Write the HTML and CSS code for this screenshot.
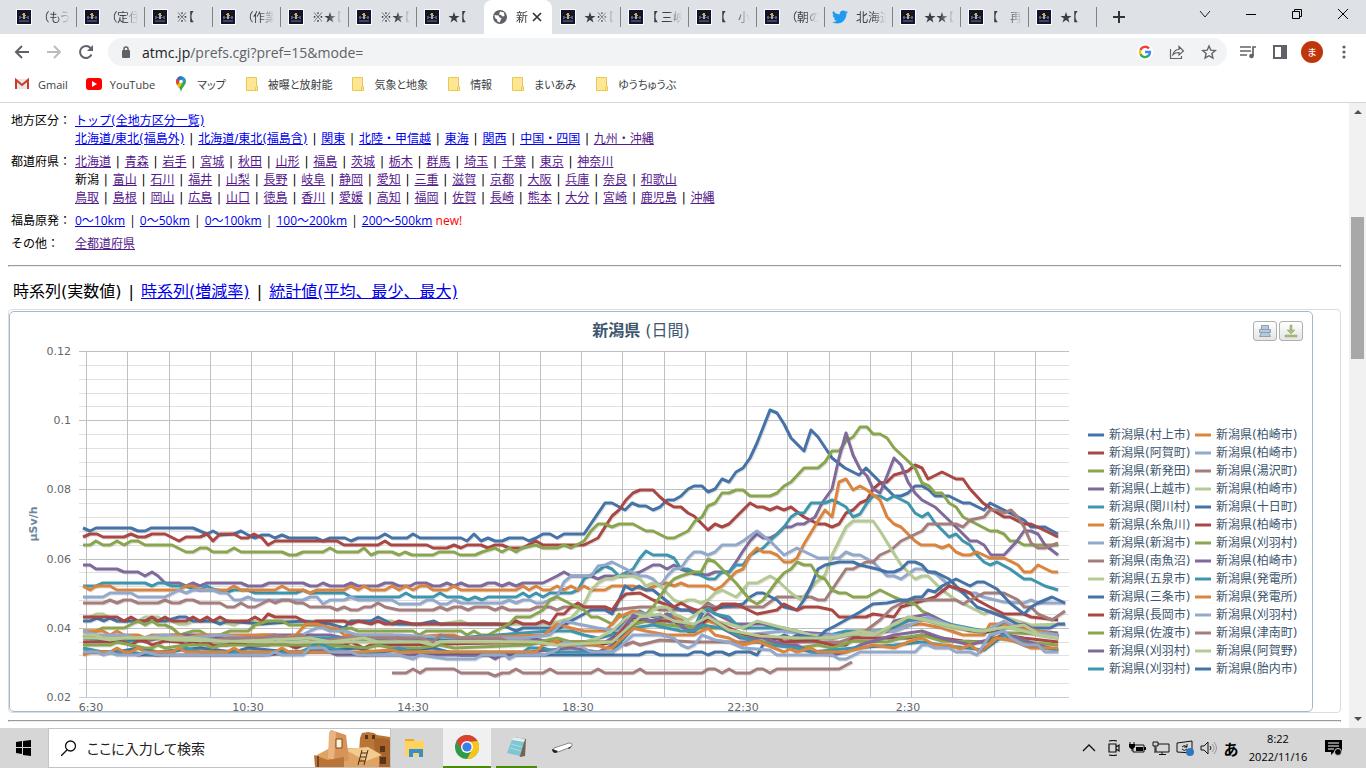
FILE: index.html
```html
<!DOCTYPE html>
<html lang="ja">
<head>
    <meta charset="UTF-8">
    <meta name="viewport" content="width=device-width, initial-scale=1.0">
    <title>新潟県</title>
    <link rel="stylesheet" href="styles.css">
</head>
<body>

    <!-- shared icons -->
    <svg class="defs" width="0" height="0">
        <symbol id="night" viewBox="0 0 16 16">
            <rect width="16" height="16" fill="#fff"/>
            <rect x="1" y="1" width="14" height="14" fill="#12142c"/>
            <path d="M3 7h2v3H3zM11 7h2v3h-2zM5 8h6v1H5z" fill="#4d5680"/>
            <path d="M7 4h2v2h1v1H9v3H7V6H6V5h1z" fill="#c9ad5a"/>
            <path d="M3 12h10" stroke="#6e7592"/>
        </symbol>
        <symbol id="folder" viewBox="0 0 16 16">
            <path d="M2.500 1.500h10v9h1v4h-11z" fill="#ffe694" stroke="#e8c84d"/>
            <path d="M11.500 14.500v-3l1-1" fill="none" stroke="#e8c84d"/>
        </symbol>
    </svg>

    <!-- tabs -->
    <header class="tabstrip">
        <div class="tabs">
            <div class="tab"><svg class="fav"><use href="#night"/></svg><span class="name">&nbsp;（もう</span></div>
            <div class="tab"><svg class="fav"><use href="#night"/></svg><span class="name">&nbsp;（定住</span></div>
            <div class="tab"><svg class="fav"><use href="#night"/></svg><span class="name">※【</span></div>
            <div class="tab"><svg class="fav"><use href="#night"/></svg><span class="name">&nbsp;（作業</span></div>
            <div class="tab"><svg class="fav"><use href="#night"/></svg><span class="name">※★【</span></div>
            <div class="tab"><svg class="fav"><use href="#night"/></svg><span class="name">※★【</span></div>
            <div class="tab no-line"><svg class="fav"><use href="#night"/></svg><span class="name">★【</span></div>
            <div class="tab active">
                <svg class="fav" viewBox="0 0 16 16"><circle cx="8" cy="8" r="7" fill="#5f6368"/><path d="M2.500 6l4 .500 1 2 2 .500-1 2.500-1 2-2-1-.500-2-2-1.500zM8 2.500l4 1 .500 3.500-2 .500-1.500-1.500-2-.500z" fill="#fff"/></svg>
                <span class="name short">新</span>
                <button class="close" aria-label="閉じる"><svg width="10" height="10"><path d="M1 1l8 8M9 1l-8 8" stroke="#333" stroke-width="1.700"/></svg></button>
            </div>
            <div class="tab"><svg class="fav"><use href="#night"/></svg><span class="name">★※【</span></div>
            <div class="tab"><svg class="fav"><use href="#night"/></svg><span class="name">【 三峡</span></div>
            <div class="tab"><svg class="fav"><use href="#night"/></svg><span class="name">【　小</span></div>
            <div class="tab"><svg class="fav"><use href="#night"/></svg><span class="name">&nbsp;（朝の</span></div>
            <div class="tab"><svg class="fav" viewBox="0 0 24 24"><path d="M23.950 4.570a10 10 0 01-2.820.770 4.960 4.960 0 002.160-2.720c-.950.550-2 .950-3.120 1.180a4.920 4.920 0 00-8.390 4.490C7.690 8.090 4.070 6.130 1.640 3.160a4.920 4.920 0 001.520 6.570 4.900 4.900 0 01-2.230-.610v.060a4.920 4.920 0 003.950 4.820 5 5 0 01-2.210.090 4.940 4.940 0 004.600 3.420A9.870 9.870 0 010 19.540a13.990 13.990 0 007.550 2.210c9.050 0 14-7.500 14-13.980l-.020-.640a10 10 0 002.420-2.560z" fill="#1d9bf0"/></svg><span class="name">北海道</span></div>
            <div class="tab"><svg class="fav"><use href="#night"/></svg><span class="name">★★【</span></div>
            <div class="tab"><svg class="fav"><use href="#night"/></svg><span class="name">【　再</span></div>
            <div class="tab"><svg class="fav"><use href="#night"/></svg><span class="name">★【</span></div>
        </div>
        <button class="new-tab" aria-label="新しいタブ"><svg width="12" height="12"><path d="M6 0v12M0 6h12" stroke="#333" stroke-width="2"/></svg></button>
        <div class="window-buttons">
            <button aria-label="タブを検索"><svg width="12" height="12"><path d="M1 3l5 6 5-6" fill="none" stroke="#222"/></svg></button>
            <button aria-label="最小化"><svg width="12" height="12"><path d="M1 6.500h10" stroke="#000"/></svg></button>
            <button aria-label="元に戻す"><svg width="12" height="12"><path d="M1.500 3.500h7v7h-7zM3.500 3.500v-2h7v7h-2" fill="none" stroke="#000"/></svg></button>
            <button aria-label="閉じる"><svg width="12" height="12"><path d="M1 1l10 10M11 1L1 11" stroke="#000"/></svg></button>
        </div>
    </header>

    <!-- address bar -->
    <div class="toolbar">
        <button aria-label="戻る"><svg width="16" height="16"><path d="M15 8H2M8 2L2 8l6 6" fill="none" stroke="#5f6368" stroke-width="2"/></svg></button>
        <button aria-label="進む"><svg width="16" height="16"><path d="M1 8h13M8 2l6 6-6 6" fill="none" stroke="#babcbe" stroke-width="2"/></svg></button>
        <button aria-label="再読み込み"><svg width="16" height="16"><path d="M13.500 10.500A6 6 0 1 1 12.500 4" fill="none" stroke="#5f6368" stroke-width="2"/><path d="M15 1v6H9z" fill="#5f6368"/></svg></button>
        <div class="omnibox">
            <svg width="10" height="14"><rect x="1" y="5" width="8" height="8" rx="1" fill="#5f6368"/><path d="M3 6V4a2 2 0 0 1 4 0v2" fill="none" stroke="#5f6368" stroke-width="1.500"/></svg>
            <a class="url" href="#"><b>atmc.jp</b>/prefs.cgi?pref=15&amp;mode=</a>
            <button aria-label="Google"><svg width="16" height="16" viewBox="0 0 16 16"><circle cx="8" cy="8" r="8" fill="#fff"/><g fill="none" stroke-width="2.400"><path d="M12 4.500A5 5 0 0 0 3.500 6" stroke="#ea4335"/><path d="M3.500 6a5 5 0 0 0 0 4.500" stroke="#fbbc05"/><path d="M3.500 10.200a5 5 0 0 0 8 1.500" stroke="#34a853"/><path d="M8 8h5a5 5 0 0 1-1.700 3.900" stroke="#4285f4"/></g></svg></button>
            <button aria-label="共有"><svg width="16" height="16"><path d="M1.500 5v9.500h11V12M4 10.500C5 7 7 5.500 10 5.500v-3L14.500 7 10 11V8.500C7 8.500 5.500 9 4 10.500z" fill="none" stroke="#5f6368" stroke-width="1.200"/></svg></button>
            <button aria-label="ブックマーク"><svg width="16" height="16"><path d="M8 2l1.800 4.200 4.500.400-3.400 3 1 4.400L8 11.700 4.100 14l1-4.400-3.400-3 4.500-.400z" fill="none" stroke="#5f6368" stroke-width="1.400"/></svg></button>
        </div>
        <button aria-label="メディア"><svg width="16" height="16"><path d="M0 3h11M0 7h11M0 11h7M13 12V3h3" fill="none" stroke="#5f6368" stroke-width="1.700"/><circle cx="11.500" cy="12" r="2.300" fill="#5f6368"/></svg></button>
        <button aria-label="サイドパネル"><svg width="16" height="16"><path d="M2 2h12v12H2z" fill="none" stroke="#5f6368" stroke-width="2"/><path d="M9 2h5v12H9z" fill="#5f6368"/></svg></button>
        <button class="avatar" aria-label="アカウント"><span>ま</span></button>
        <button aria-label="メニュー"><svg width="4" height="16"><g fill="#5f6368"><circle cx="2" cy="3" r="1.600"/><circle cx="2" cy="8" r="1.600"/><circle cx="2" cy="13" r="1.600"/></g></svg></button>
    </div>

    <nav class="bookmarks">
        <a href="#"><svg width="16" height="16"><path d="M1 3h14v10H1z" fill="#e8e8e8"/><path d="M2 13V4l6 5 6-5v9" fill="none" stroke="#d0382c" stroke-width="2"/></svg>Gmail</a>
        <a href="#"><svg width="16" height="16"><rect y="2" width="16" height="12" rx="3" fill="#f00"/><path d="M6 5l5 3-5 3z" fill="#fff"/></svg>YouTube</a>
        <a href="#"><svg width="16" height="16"><path d="M3 5.500a5 5 0 0 1 10 0C13 9 9 11 8 16 7 11 3 9 3 5.500z" fill="#34a853"/><path d="M3 6a5 5 0 0 1 1.500-4.200L8 5.500 4 9.500z" fill="#ea4335"/><path d="M4.500 1.800A5 5 0 0 1 10 .900L6 6z" fill="#1a73e8"/><path d="M10 .900A5 5 0 0 1 12.600 3.500L9 8z" fill="#4285f4"/><path d="M4 9l3-3 2 2-3 4z" fill="#fbbc04"/><circle cx="8" cy="5.500" r="1.800" fill="#fff"/></svg>マップ</a>
        <a href="#"><svg width="16" height="16"><use href="#folder"/></svg>被曝と放射能</a>
        <a href="#"><svg width="16" height="16"><use href="#folder"/></svg>気象と地象</a>
        <a href="#"><svg width="16" height="16"><use href="#folder"/></svg>情報</a>
        <a href="#"><svg width="16" height="16"><use href="#folder"/></svg>まいあみ</a>
        <a href="#"><svg width="16" height="16"><use href="#folder"/></svg>ゆうちゅうぶ</a>
    </nav>

    <!-- page -->
    <div class="viewport">
        <main class="page">
            <table class="areas">
                <tr>
                    <th>地方区分：</th>
                    <td>
                        <a href="#">トップ(全地方区分一覧)</a><br>
                        <a href="#">北海道/東北(福島外)</a> <i>|</i> <a href="#">北海道/東北(福島含)</a> <i>|</i> <a href="#">関東</a> <i>|</i> <a href="#">北陸・甲信越</a> <i>|</i> <a href="#">東海</a> <i>|</i> <a href="#">関西</a> <i>|</i> <a href="#">中国・四国</a> <i>|</i> <a class="seen" href="#">九州・沖縄</a>
                    </td>
                </tr>
                <tr class="seen-all">
                    <th>都道府県：</th>
                    <td>
                        <a href="#">北海道</a> <i>|</i> <a href="#">青森</a> <i>|</i> <a href="#">岩手</a> <i>|</i> <a href="#">宮城</a> <i>|</i> <a href="#">秋田</a> <i>|</i> <a href="#">山形</a> <i>|</i> <a href="#">福島</a> <i>|</i> <a href="#">茨城</a> <i>|</i> <a href="#">栃木</a> <i>|</i> <a href="#">群馬</a> <i>|</i> <a href="#">埼玉</a> <i>|</i> <a href="#">千葉</a> <i>|</i> <a href="#">東京</a> <i>|</i> <a href="#">神奈川</a><br>
                        新潟 <i>|</i> <a href="#">富山</a> <i>|</i> <a href="#">石川</a> <i>|</i> <a href="#">福井</a> <i>|</i> <a href="#">山梨</a> <i>|</i> <a href="#">長野</a> <i>|</i> <a href="#">岐阜</a> <i>|</i> <a href="#">静岡</a> <i>|</i> <a href="#">愛知</a> <i>|</i> <a href="#">三重</a> <i>|</i> <a href="#">滋賀</a> <i>|</i> <a href="#">京都</a> <i>|</i> <a href="#">大阪</a> <i>|</i> <a href="#">兵庫</a> <i>|</i> <a href="#">奈良</a> <i>|</i> <a href="#">和歌山</a><br>
                        <a href="#">鳥取</a> <i>|</i> <a href="#">島根</a> <i>|</i> <a href="#">岡山</a> <i>|</i> <a href="#">広島</a> <i>|</i> <a href="#">山口</a> <i>|</i> <a href="#">徳島</a> <i>|</i> <a href="#">香川</a> <i>|</i> <a href="#">愛媛</a> <i>|</i> <a href="#">高知</a> <i>|</i> <a href="#">福岡</a> <i>|</i> <a href="#">佐賀</a> <i>|</i> <a href="#">長崎</a> <i>|</i> <a href="#">熊本</a> <i>|</i> <a href="#">大分</a> <i>|</i> <a href="#">宮崎</a> <i>|</i> <a href="#">鹿児島</a> <i>|</i> <a href="#">沖縄</a>
                    </td>
                </tr>
                <tr>
                    <th>福島原発：</th>
                    <td class="range"><a href="#">0～10km</a> <i>|</i> <a href="#">0～50km</a> <i>|</i> <a href="#">0～100km</a> <i>|</i> <a href="#">100～200km</a> <i>|</i> <a href="#">200～500km</a> <span class="new">new!</span></td>
                </tr>
                <tr class="seen-all">
                    <th>その他：</th>
                    <td><a href="#">全都道府県</a></td>
                </tr>
            </table>
            <hr>
            <p class="modes">時系列(実数値) <i>|</i> <a href="#">時系列(増減率)</a> <i>|</i> <a href="#">統計値(平均、最少、最大)</a></p>
            <div class="panel">
                <div class="chart">
                    <svg id="chart" viewBox="10 312 1302 399">
                        <g id="grid"></g>
                        <g id="lines"></g>
                        <text class="title" x="641" y="336"><tspan class="strong">新潟県</tspan> (日間)</text>
                        <text class="unit" transform="translate(37 524) rotate(-90)">μSv/h</text>
                        <g id="legend"></g>
                    </svg>
                    <div class="export">
                        <button aria-label="印刷"><svg width="14" height="14"><path d="M3.500 1.500h7v4h-7zM1.500 5.500h11v3h-11zM3.500 8.500h7l2 4h-11z" fill="#b5c9df" stroke="#8fa0b3"/></svg></button>
                        <button aria-label="ダウンロード"><svg width="14" height="14"><path d="M6 1h2v5h3L7 10 3 6h3zM1 11h12v2H1z" fill="#a8bf77" stroke="#94a36f" stroke-width=".5"/></svg></button>
                    </div>
                </div>
            </div>
            <hr>
        </main>
        <div class="scrollbar">
            <svg width="17" height="17"><path d="M5 11l4-4 4 4z" fill="#505050"/></svg>
            <div class="above"></div>
            <div class="thumb"></div>
            <div class="below"></div>
            <svg width="17" height="17"><path d="M5 6l4 4 4-4z" fill="#505050"/></svg>
        </div>
    </div>

    <!-- taskbar -->
    <footer class="taskbar">
        <button class="start" aria-label="スタート"><svg width="16" height="16"><path d="M0 2l6-1v6H0zM7 1l8-1v7H7zM0 8h6v6l-6-1zM7 8h8v8l-8-1z"/></svg></button>
        <div class="search">
            <svg width="16" height="16"><circle cx="9.500" cy="6" r="5" fill="none" stroke="#111" stroke-width="1.300"/><path d="M6 10l-6 6" stroke="#111" stroke-width="1.300"/></svg>
            <input type="text" aria-label="検索" placeholder="ここに入力して検索">
            <svg class="castle" width="76" height="38" viewBox="0 0 76 38">
                <path d="M46 9l2-5 6-1 6 1 3 2 13 2v30H44z" fill="#b87535"/>
                <path d="M60 10l8-1 8 2v27H62z" fill="#a9652c"/>
                <path d="M1 27l15-8h36l13 8v11H1z" fill="#dfa464"/>
                <path d="M30 20l24-2 14 8-16 6z" fill="#f1cb91"/>
                <path d="M15 4l2-3 15 5 3 25q-9 5-20 1z" fill="#d6935a"/>
                <path d="M15 4l2-3 5 2-2 28-6-2z" fill="#e8b582"/>
                <path d="M22 10h6v9h-6z" fill="#fff0d6" stroke="#80491f"/>
                <path d="M0 26l14 5 16-3v10H1z" fill="#ba7438"/>
                <path d="M4 27v11" stroke="#7c451d" stroke-width="2"/>
                <path d="M51 6h3v4h-3zM58 6h3v4h-3zM66 17h5v6h-5zM66 28h6v7h-6z" fill="#59341a"/>
                <path d="M44 36l4-15M50 36l4-15M45 32h6M46 28h6M47 24h6" stroke="#4d2b16" fill="none"/>
            </svg>
        </div>
        <button class="app" aria-label="エクスプローラー"><svg class="shift" width="24" height="24"><path d="M1 3h8l2 2h9v15H1z" fill="#ffd45e"/><path d="M1 3h8l2 2H1z" fill="#eaa928"/><path d="M5 13h14v8h-4v-4H9v4H5z" fill="#368ed3"/></svg></button>
        <button class="app current" aria-label="Chrome"><svg width="24" height="24" viewBox="0 0 24 24"><circle cx="12" cy="12" r="12" fill="#30994b"/><path d="M1.600 6A12 12 0 0 1 22.400 6L12 7 7 15z" fill="#dd3f31"/><path d="M22.400 6A12 12 0 0 1 12 24l5-9-5-8z" fill="#fbc518"/><circle cx="12" cy="12" r="6" fill="#fff"/><circle cx="12" cy="12" r="4.600" fill="#397fe8"/></svg></button>
        <button class="app open" aria-label="メモ帳"><svg width="24" height="24"><path d="M8 2l13 2-1 17-5 1z" fill="#75644a"/><path d="M8 2l12 2-5 17-13-3z" fill="#80c5d2"/><path d="M8 2l12 2-1 3L7 5z" fill="#e6edf0"/><path d="M6 9l11 3M5 13l11 3" stroke="#a9dce4"/></svg></button>
        <button class="app" aria-label="ペン"><svg width="24" height="24"><path d="M4 12L19 7q5 0 2 4L8 16q-6 2-4-4z" fill="#fff" stroke="#8a8a8a"/><path d="M2 13l6 2-2 2q-4 0-4-4zM18 12l4-2-3 3z" fill="#222"/></svg></button>
        <div class="tray">
            <svg width="24" height="16"><path d="M6 11l6-6 6 6" fill="none" stroke="#111" stroke-width="1.300"/></svg>
            <svg width="24" height="16"><path d="M8 4h7v8H8zM15 7l3-2v6l-3-2M8 1q4-1 8 0M8 15q4 1 8 0" fill="none" stroke="#111" stroke-width="1.200"/></svg>
            <svg width="24" height="16"><path d="M9 5h10v7H8V9" fill="none" stroke="#111"/><path d="M11 7h7v4h-7zM19 7h2v3h-2zM4 4h6v3L8 9H6L4 7z"/><path d="M5 2v2M9 2v2M7 9v2" stroke="#111"/></svg>
            <svg width="24" height="16"><path d="M9 4h11v8H7V7M4 2h5v4H4zM6 6v7M13 12v3M10 14.500h7" fill="none" stroke="#111"/></svg>
            <svg width="24" height="16"><path d="M4 3l15-2v12L4 12zM9 7q2-3 5 0M14 4v3h-3M14 9q-3 3-5 0" fill="none" stroke="#111"/><circle cx="17" cy="12" r="4" fill="#2d76c4"/></svg>
            <svg width="24" height="16"><path d="M4 6h3l4-4v12l-4-4H4zM13 6q2 2 0 4" fill="none" stroke="#111"/><path d="M15 4q4 4 0 8M17 2q5 6 0 12" fill="none" stroke="#999"/></svg>
            <span class="ime">あ</span>
            <div class="clock"><span>8:22</span><span>2022/11/16</span></div>
            <svg class="notice" width="17" height="16"><path d="M0 0h17v12H9l-3 3v-3H0z"/><path d="M3 3h11M3 6h11M3 9h6" stroke="#fff"/><circle cx="13" cy="12" r="3.500" stroke="#d6d6d6"/></svg>
        </div>
    </footer>

    <script src="chart.js"></script>
</body>
</html>
```
FILE: styles.css
```css
* {
    box-sizing: border-box;
}

body {
    margin: 0;
    height: 100vh;
    display: flex;
    flex-direction: column;
    overflow: hidden;
    background: #fff;
    font-family: "DejaVu Sans", "Noto Sans CJK JP", sans-serif;
    font-size: 12px;
}

button {
    display: flex;
    align-items: center;
    justify-content: center;
    padding: 0;
    border: none;
    background: none;
    font: inherit;
}

svg {
    flex-shrink: 0;
}

.defs {
    position: absolute;
}

/* tabs */
.tabstrip {
    display: flex;
    height: 34px;
    padding-left: 8px;
    background: #dee1e6;
    font-family: "Open Sans", "Noto Sans CJK JP", sans-serif;
    font-feature-settings: "palt";
}

.tabs {
    display: flex;
}

.tab {
    position: relative;
    display: flex;
    align-items: center;
    width: 68px;
    padding-left: 8px;
    color: #3c4043;
}

.tab::after {
    content: "";
    position: absolute;
    right: -1px;
    top: 7px;
    width: 1px;
    height: 20px;
    background: #808488;
}

.tab.active::after,
.tab.no-line::after {
    display: none;
}

.tab.active {
    background: #fff;
    border-radius: 8px 8px 0 0;
}

.fav {
    width: 16px;
    height: 16px;
}

.name {
    width: 36px;
    margin-left: 8px;
    white-space: nowrap;
    -webkit-mask-image: linear-gradient(to right, #000 16px, transparent 30px);
    mask-image: linear-gradient(to right, #000 16px, transparent 30px);
}

.name.short {
    width: 12px;
}

.close {
    margin-left: 4px;
}

.new-tab {
    width: 28px;
    margin-left: 9px;
}

.window-buttons {
    display: flex;
    height: 28px;
    margin-left: auto;
}

.window-buttons button {
    width: 46px;
}

/* address bar */
.toolbar {
    display: flex;
    align-items: center;
    height: 36px;
    padding: 0 6px;
    font-family: "Open Sans", "Noto Sans CJK JP", sans-serif;
}

.toolbar button {
    width: 32px;
    height: 28px;
}

.omnibox {
    display: flex;
    align-items: center;
    flex: 1;
    height: 28px;
    margin: 0 5px 0 6px;
    padding: 0 2px 0 13px;
    border-radius: 14px;
    background: #f1f3f4;
    font-size: 14px;
}

.url {
    flex: 1;
    margin-left: 11px;
    color: #5f6368;
    text-decoration: none;
}

.url b {
    font-weight: normal;
    color: #202124;
}

.avatar span {
    width: 22px;
    height: 22px;
    border-radius: 50%;
    background: #bf360c;
    color: #fff;
    font-size: 10px;
    line-height: 22px;
}

.bookmarks {
    display: flex;
    align-items: center;
    gap: 18px;
    height: 33px;
    padding: 0 14px 4px;
    border-bottom: 1px solid #d7d7d9;
    font-family: "Open Sans", "Noto Sans CJK JP", sans-serif;
    font-size: 11px;
    font-feature-settings: "palt";
}

.bookmarks a {
    display: flex;
    align-items: center;
    gap: 8px;
    color: #3c4043;
    text-decoration: none;
}

/* page */
.viewport {
    display: flex;
    flex: 1;
    min-height: 0;
}

.page {
    flex: 1;
    overflow: hidden;
    padding: 4px 8px 0;
}

.page a {
    color: #0000ee;
}

.page .seen,
.seen-all a {
    color: #551a8b;
}

.page i {
    margin: 0 1px;
    font-style: normal;
}

.areas {
    border-spacing: 0 5px;
    line-height: 18px;
}

.areas th {
    width: 67px;
    padding: 0 0 0 3px;
    font-weight: normal;
    text-align: left;
    vertical-align: top;
    white-space: nowrap;
}

.areas td {
    padding: 0;
}

.areas .range {
    font-family: "Open Sans", "Noto Sans CJK JP", sans-serif;
}

.page .new {
    color: #f00;
}

hr {
    margin: 7px 0;
    border: 1px solid #9a9a9a;
    border-bottom-color: #eee;
}

.modes {
    margin: 14px 0 6px 5px;
    font-size: 16px;
    line-height: 22px;
}

.page .modes i {
    margin: 0 2px;
}

.panel {
    padding: 1px 27px 0 0;
    border: 1px solid #ddd;
    border-radius: 4px;
}

.chart {
    position: relative;
    border: 1px solid #a2b8d3;
    border-radius: 5px;
}

#chart {
    display: block;
    width: 100%;
}

#chart text {
    font-size: 11px;
    fill: #666;
}

#chart .title {
    font-size: 16px;
    fill: #3e576f;
    text-anchor: middle;
}

#chart .strong {
    font-weight: bold;
}

#chart .unit {
    font-weight: bold;
    fill: #6d869f;
    text-anchor: middle;
}

#chart .key {
    font-size: 12px;
    fill: #3e576f;
}

#lines polyline {
    fill: none;
    stroke-width: 3;
    stroke-linejoin: round;
}

#lines .shadow {
    stroke: #000;
    stroke-opacity: 0.12;
}

.export {
    position: absolute;
    top: 9px;
    right: 9px;
    display: flex;
    gap: 2px;
}

.export button {
    width: 24px;
    height: 20px;
    border: 1px solid #b0b0b0;
    border-radius: 3px;
    background: linear-gradient(#fff, #e4e4e4);
}

.scrollbar {
    display: flex;
    flex-direction: column;
    width: 17px;
    background: #f1f1f1;
}

.above {
    flex: 97;
}

.thumb {
    flex: 142;
    margin: 0 2px;
    background: #a8a8a8;
}

.below {
    flex: 352;
}

/* taskbar */
.taskbar {
    display: flex;
    height: 40px;
    background: #d6d6d6;
    font-family: "Open Sans", "Noto Sans CJK JP", sans-serif;
}

.start {
    width: 48px;
}

.search {
    display: flex;
    align-items: center;
    width: 343px;
    padding-left: 12px;
    border: 1px solid #c4c4c4;
    background: #fff;
}

.search input {
    flex: 1;
    min-width: 0;
    padding: 0 0 0 10px;
    border: none;
    outline: none;
    font: inherit;
    font-size: 14px;
    font-feature-settings: "palt";
}

.search input::placeholder {
    color: #222;
}

.castle {
    align-self: flex-end;
}

.app {
    width: 48px;
    margin-left: 1px;
}

.app.current {
    margin-left: 3px;
    background: #f0f0f0;
    border-bottom: 2px solid #4a8a08;
}

.app.open {
    width: 41px;
    margin-left: 5px;
    border-bottom: 2px solid #4a8a08;
}

.tray {
    display: flex;
    align-items: center;
    margin-left: auto;
    padding-right: 24px;
}

.ime {
    width: 20px;
    font-size: 15px;
    font-weight: bold;
    text-align: center;
}

.clock {
    display: flex;
    flex-direction: column;
    width: 74px;
    font-size: 11px;
    line-height: 18px;
    text-align: center;
}

.notice {
    margin-left: 10px;
}
```
FILE: chart.js
```js
const NS = 'http://www.w3.org/2000/svg';
const colors = ['#4572A7', '#AA4643', '#89A54E', '#80699B', '#3D96AE', '#DB843D', '#92A8CD', '#A47D7C', '#B5CA92'];

function add(parent, tag, attrs, text) {
    const el = document.createElementNS(NS, tag);
    for (const key in attrs) el.setAttribute(key, attrs[key]);
    if (text) el.textContent = text;
    document.getElementById(parent).appendChild(el);
}

// grid: 0.02 at the bottom, 0.12 at the top, one vertical line per hour
for (let n = 0; n <= 25; n++) {
    const y = Math.round(351 + n * 13.84) + 0.5;
    const stroke = n === 25 ? '#c0d0e0' : n % 5 ? '#e0e0e0' : '#c0c0c0';
    add('grid', 'line', { x1: 79, x2: 1069, y1: y, y2: y, stroke });
}
for (let n = 0; n < 24; n++) {
    const x = Math.round(86 + n * 41.25) + 0.5;
    add('grid', 'line', { x1: x, x2: x, y1: 351, y2: 697, stroke: '#c0c0c0' });
}
['0.12', '0.1', '0.08', '0.06', '0.04', '0.02'].forEach((label, n) => {
    add('grid', 'text', { x: 71, y: 355 + Math.round(n * 69.2), 'text-anchor': 'end' }, label);
});
['6:30', '10:30', '14:30', '18:30', '22:30', '2:30'].forEach((label, n) => {
    add('grid', 'text', { x: n ? 83 + n * 165 : 91, y: 711, 'text-anchor': 'middle' }, label);
});

// [colour, points]
const series = [
    [0, '83,528 90,531 96,528 131,528 138,531 145,531 151,528 193,528 200,531 207,534 213,531 220,535 234,534 241,531 248,535 255,538 262,535 269,535 275,538 282,535 289,538 316,538 323,541 330,538 345,538 351,541 358,538 378,538 385,534 392,538 407,538 413,534 420,538 461,538 467,541 474,534 481,541 488,538 495,541 502,541 509,538 523,538 529,541 536,538 543,534 550,534 557,538 564,534 584,534 605,503 612,503 625,510 632,503 639,506 646,506 653,510 660,507 667,500 674,500 681,496 688,489 694,486 702,486 708,492 715,489 722,479 729,482 736,472 743,468 750,458 757,443 770,410 777,413 784,424 791,438 804,451 811,430 818,437 832,458 845,468 859,475 866,468 880,482 894,496 901,496 908,493 915,486 922,486 929,490 935,496 949,496 963,503 970,503 984,510 990,503 1004,510 1024,520 1031,527 1045,527 1058,534'],
    [1, '83,537 90,534 97,534 103,537 124,537 131,534 138,537 145,537 152,534 165,534 179,541 186,537 200,537 207,534 213,541 220,534 234,534 241,538 248,538 254,534 262,538 268,545 275,541 337,541 344,545 378,545 385,541 391,545 427,545 433,548 447,548 454,545 461,548 467,545 481,545 488,548 495,545 502,545 509,548 522,548 536,541 543,545 584,545 598,538 605,527 612,516 619,510 626,500 633,493 640,490 653,490 660,497 667,503 674,507 681,507 688,513 694,516 708,530 715,524 722,527 729,524 750,503 757,507 763,507 770,510 777,507 784,510 791,507 804,517 818,524 825,524 832,527 839,524 846,513 853,510 860,503 867,500 873,489 880,483 887,482 894,475 908,471 915,465 922,468 928,479 942,472 956,479 963,479 970,489 983,503 996,512 1004,517 1010,517 1024,524 1031,524 1044,530 1058,537'],
    [2, '83,545 90,545 96,541 103,545 110,545 117,541 124,545 131,541 138,541 145,545 172,545 186,552 193,552 200,548 207,548 213,552 227,552 234,548 241,552 282,552 289,555 296,555 303,552 323,552 330,548 337,552 358,552 364,548 371,555 378,552 392,552 399,555 405,552 412,555 433,555 439,552 454,552 460,555 475,555 482,552 495,548 502,552 509,548 516,552 522,548 536,545 543,548 557,548 564,545 571,548 584,541 591,531 598,524 605,524 612,527 619,524 633,524 646,531 653,531 667,538 674,538 688,531 695,521 702,517 708,506 715,503 722,493 729,493 736,490 743,490 750,496 770,496 777,493 784,486 791,482 804,468 818,468 825,462 832,451 839,451 846,441 853,437 860,427 867,427 873,434 880,434 887,438 894,448 908,461 915,468 922,483 929,486 935,493 942,493 949,503 956,507 963,517 990,531 997,531 1004,534 1010,541 1017,541 1024,545 1058,545'],
    [3, '83,565 90,565 96,569 117,569 124,572 138,572 145,576 152,572 158,576 165,583 179,583 186,586 193,583 200,586 207,583 241,583 248,586 262,586 269,583 303,583 310,586 317,586 323,583 330,586 344,586 351,583 358,586 378,586 385,583 392,583 399,586 410,586 416,583 426,583 433,586 440,586 447,583 454,586 461,583 468,586 481,586 488,583 495,583 502,586 509,583 516,586 523,583 543,583 557,576 564,572 571,576 591,576 598,579 605,576 625,576 640,572 653,565 660,565 667,569 674,565 681,569 695,574 708,575 715,572 729,572 736,562 743,551 750,541 757,534 763,538 770,538 777,534 784,527 791,527 797,524 804,524 815,517 822,503 832,489 839,458 846,433 853,455 860,469 867,476 873,489 880,493 887,476 894,458 901,465 908,482 915,493 922,500 935,507 956,527 970,541 977,541 984,545 991,555 1004,555 1017,541 1024,531 1031,531 1038,534 1045,545 1058,555'],
    [4, '83,586 96,586 103,583 145,583 152,586 158,583 165,583 172,586 186,586 193,589 200,590 207,586 213,589 227,592 234,590 248,590 255,593 296,593 303,590 310,593 344,593 351,597 399,597 406,593 413,597 433,597 440,593 447,597 461,597 468,600 475,597 482,600 488,597 516,597 523,593 529,597 536,593 543,597 550,593 571,593 578,590 584,579 598,571 605,566 612,569 619,576 633,569 640,558 646,551 653,555 667,555 674,558 681,569 688,569 694,572 708,579 715,579 722,572 729,572 736,565 743,565 750,555 763,548 784,527 791,517 797,513 804,513 811,503 825,503 832,500 839,503 846,507 853,517 860,514 867,503 873,496 880,496 887,500 894,496 908,503 915,513 922,517 928,513 935,523 949,537 956,534 963,541 970,545 977,555 984,562 990,565 997,562 1010,569 1024,579 1031,579 1045,586 1058,590'],
    [5, '83,586 90,590 96,586 110,586 117,590 179,590 186,586 193,586 200,590 227,590 234,586 241,590 275,590 282,586 289,590 303,590 310,593 317,590 344,590 351,586 358,590 364,586 371,590 385,590 392,586 399,590 406,586 413,590 420,586 427,586 433,590 447,590 454,586 461,590 516,590 523,586 529,590 536,586 543,590 550,590 557,586 564,590 571,586 578,590 584,586 591,590 605,590 612,586 633,586 646,590 660,584 667,583 674,586 681,583 688,586 708,586 715,590 722,586 736,572 743,569 750,555 757,548 763,552 770,552 777,555 784,562 791,562 797,558 804,544 818,521 825,510 832,517 839,482 846,479 853,490 860,486 867,490 880,500 887,517 894,524 901,527 915,541 921,545 935,545 942,548 949,545 956,552 963,555 970,555 977,552 990,558 1004,558 1018,565 1024,572 1031,572 1038,565 1052,572 1058,572'],
    [6, '83,597 103,597 110,593 131,593 138,597 165,597 179,590 186,593 193,590 213,590 220,593 227,593 234,600 241,600 248,597 255,600 303,600 310,597 317,597 323,604 330,600 344,600 351,597 358,600 392,600 399,604 420,604 427,600 433,600 440,604 447,604 454,600 461,603 502,603 509,600 516,603 523,600 530,600 536,603 543,603 557,596 564,582 571,576 591,576 598,566 605,565 612,562 626,569 640,576 646,576 653,579 660,586 667,576 674,569 681,568 688,558 694,552 701,552 708,555 715,552 722,545 736,545 743,541 757,531 770,541 784,555 797,548 818,558 839,558 846,552 853,555 860,555 873,562 887,576 894,576 901,579 915,569 922,569 936,574 950,586 963,593 976,593 983,597 1004,602 1024,603 1031,600 1038,603 1065,603'],
    [7, '83,603 103,603 110,600 117,603 124,600 131,600 138,603 158,603 165,600 172,603 179,603 186,600 193,600 200,603 220,603 227,607 234,607 241,603 248,607 255,607 269,600 275,603 282,600 289,600 296,603 303,603 310,607 330,607 337,610 344,607 351,610 358,610 364,607 371,607 378,603 385,607 399,610 433,610 440,607 447,610 454,607 461,607 468,610 475,607 488,607 495,610 502,607 509,610 530,610 537,607 550,607 557,610 564,607 605,607 612,610 640,607 653,607 660,610 700,610 708,603 715,607 763,607 777,597 811,597 818,600 825,600 846,569 853,569 866,562 873,562 880,555 891,550 901,541 922,531 928,524 956,524 963,527 970,520 984,517 990,510 997,510 1004,513 1011,510 1018,517 1024,527 1031,543 1038,548 1045,548 1058,543'],
    [8, '83,617 90,617 97,614 103,614 117,621 138,621 145,617 158,617 165,621 172,621 179,624 186,624 193,621 220,621 234,625 241,621 392,621 399,624 440,624 461,621 468,624 550,624 571,618 584,604 591,590 598,583 605,579 612,579 619,576 633,576 640,579 646,586 653,583 660,586 674,600 681,603 688,600 694,600 701,603 708,600 715,593 722,590 736,597 743,590 748,583 757,583 770,576 777,580 791,593 801,600 815,583 825,575 832,555 839,541 846,527 853,521 873,521 880,531 901,565 915,579 922,576 928,576 942,590 956,600 970,607 984,614 990,611 1004,617 1031,625 1065,624'],
    [0, '83,621 90,621 97,618 104,621 110,618 117,621 165,621 179,617 186,617 193,621 213,621 220,624 227,621 262,624 303,621 330,624 344,628 351,621 371,621 378,617 392,624 420,624 434,621 440,624 500,624 509,628 516,631 523,628 560,628 571,621 584,614 591,610 605,610 612,614 619,600 625,586 632,590 639,586 646,590 653,590 674,607 681,610 688,610 694,613 708,610 722,607 743,604 750,597 757,593 763,593 777,600 784,607 797,610 804,600 811,586 818,569 825,565 839,562 853,562 860,565 877,569 887,572 894,572 901,569 908,562 915,562 922,565 928,572 935,572 949,579 960,590 977,607 1004,617 1017,624 1030,628 1050,628 1058,624 1065,624'],
    [1, '83,617 117,617 124,621 131,617 138,621 145,621 152,617 158,621 165,617 172,621 186,621 193,617 200,621 207,617 213,621 220,617 227,621 248,621 255,617 262,621 268,614 275,617 296,617 310,624 316,621 344,621 351,624 358,621 371,624 378,621 385,624 392,624 399,621 413,624 509,624 516,621 523,624 536,624 543,621 550,624 557,614 564,614 571,607 578,603 584,607 605,607 612,610 619,600 626,594 640,593 653,600 674,607 681,603 688,607 698,611 708,607 715,610 722,604 736,604 757,614 777,610 784,604 797,610 804,607 818,607 832,610 839,617 866,617 873,614 894,617 901,607 915,603 935,597 949,586 963,590 970,593 977,600 990,607 1004,614 1024,614 1031,617 1058,620'],
    [2, '83,631 96,631 103,628 124,628 138,621 145,625 152,621 158,625 165,625 172,628 180,635 193,631 200,631 207,635 220,635 230,631 248,631 255,625 268,621 282,621 289,625 317,625 337,630 351,628 358,631 413,631 419,635 426,631 461,631 467,635 474,631 481,635 488,635 509,624 516,617 530,617 543,610 550,600 557,597 571,604 584,610 591,617 598,617 612,624 619,614 633,621 640,621 646,614 653,607 667,586 674,579 681,576 694,572 701,572 708,559 715,562 736,583 750,600 757,604 763,600 777,581 784,573 791,569 797,562 804,565 811,565 818,576 825,579 832,590 839,593 846,593 853,597 867,597 880,590 894,597 908,603 915,604 922,611 935,617 950,625 970,631 1058,635'],
    [3, '83,638 150,638 172,635 200,635 234,638 262,635 300,635 330,635 344,638 399,638 530,638 550,642 600,645 612,638 619,628 626,620 633,614 640,618 653,621 667,614 680,617 688,631 694,631 702,614 708,610 722,617 736,624 763,624 784,631 840,635 887,631 894,621 908,618 928,614 942,621 960,628 984,631 1004,628 1024,624 1038,631 1058,633'],
    [4, '83,638 124,642 158,638 262,642 310,638 344,638 400,642 550,631 571,631 584,635 598,638 612,635 626,617 640,611 653,617 674,614 681,624 694,628 702,611 708,608 715,614 729,617 736,624 743,628 784,628 797,631 818,638 846,631 873,631 894,628 908,621 928,618 949,624 984,631 1004,624 1038,631 1058,635'],
    [5, '83,631 103,631 110,635 117,631 124,635 138,635 145,638 152,635 180,635 186,638 200,635 275,635 282,638 296,635 306,624 317,624 330,628 337,628 344,635 392,635 399,638 440,635 454,635 461,638 544,635 557,624 571,628 584,631 605,631 619,617 633,611 646,614 660,617 674,617 694,628 708,621 720,625 740,635 770,638 811,638 832,638 860,631 894,631 908,625 922,624 942,628 963,635 984,635 990,624 1004,624 1024,628 1058,635'],
    [6, '83,631 96,635 124,635 138,638 165,635 186,638 220,635 248,638 296,638 310,631 317,628 323,628 330,631 344,631 358,635 399,635 454,638 523,638 550,635 557,628 564,621 578,624 598,628 619,631 633,614 646,614 660,617 674,625 694,628 708,614 722,625 743,635 784,631 811,635 846,635 870,631 894,631 908,626 928,617 949,625 984,632 1004,621 1024,631 1058,635'],
    [7, '83,635 90,638 96,635 103,638 137,638 145,642 158,638 193,642 230,638 262,638 275,635 289,638 300,635 317,642 344,638 420,638 433,642 440,635 461,638 500,638 509,642 612,642 626,645 633,642 640,645 660,640 694,642 840,642 860,635 880,620 892,608 908,600 956,600 963,604 970,600 984,593 1004,593 1018,600 1024,607 1031,607 1038,614 1052,620 1065,611'],
    [8, '83,635 96,635 103,638 179,638 193,638 227,642 310,638 330,642 364,638 378,642 427,642 434,645 440,642 584,642 598,638 612,631 626,618 633,614 646,617 653,610 660,607 667,607 674,614 688,620 702,610 715,621 729,624 743,628 757,621 784,628 797,631 811,635 832,638 860,631 880,635 894,624 908,617 928,621 949,628 984,631 1004,628 1024,625 1040,635 1058,638'],
    [0, '83,652 117,652 138,648 158,652 200,648 234,652 248,648 290,652 344,649 358,648 371,652 420,649 433,648 461,655 639,655 646,652 653,652 660,655 688,655 694,652 702,652 708,655 715,652 722,652 729,655 736,652 750,652 757,655 763,645 784,635 791,638 797,635 818,638 825,631 835,626 860,612 873,604 887,603 901,600 908,600 915,597 922,597 928,590 935,592 942,586 956,579 970,586 977,582 984,582 997,589 1010,603 1024,614 1031,607 1038,603 1052,597 1065,603'],
    [1, '83,642 124,642 131,645 138,641 145,641 152,645 165,641 179,642 186,645 193,641 200,645 207,642 213,645 227,645 234,642 248,645 268,645 275,642 289,645 296,648 303,645 344,645 351,642 364,648 371,645 399,645 536,642 584,642 598,645 612,642 633,617 646,621 674,621 688,631 694,631 708,618 729,628 746,635 763,635 777,638 784,642 811,640 832,645 846,645 853,638 873,638 908,638 922,635 942,638 963,641 984,642 1004,635 1024,638 1058,642'],
    [2, '83,645 110,645 117,642 131,645 145,648 152,648 158,645 165,648 186,645 206,645 213,648 220,645 262,645 330,645 367,648 378,645 392,648 420,648 440,645 454,648 530,645 543,641 557,638 571,642 612,642 633,625 646,621 667,625 694,628 722,628 736,635 763,642 784,645 797,648 818,645 832,648 853,641 887,642 901,638 922,635 942,641 984,642 997,638 1024,642 1058,645'],
    [3, '83,652 131,652 138,655 262,655 310,652 330,652 337,655 420,655 488,655 495,659 502,655 529,652 571,648 598,652 619,642 633,615 640,618 653,622 667,614 688,631 694,631 708,614 722,628 740,638 763,638 784,645 797,645 811,652 832,655 846,652 860,645 894,635 922,631 942,638 970,645 987,640 997,631 1018,638 1038,645 1058,650'],
    [4, '83,648 103,652 124,652 158,655 186,648 200,652 300,652 310,648 317,642 330,648 364,655 378,652 399,648 413,652 523,652 529,648 543,648 557,652 612,652 633,628 653,625 667,628 681,631 694,631 702,625 722,628 743,638 770,645 797,648 811,652 853,648 894,645 922,642 942,645 984,650 1004,635 1024,645 1058,650'],
    [5, '83,655 90,652 110,652 117,648 124,652 131,652 138,648 145,652 172,652 179,648 186,652 227,652 234,648 241,652 275,652 282,648 289,652 358,652 392,650 399,652 536,652 543,645 557,641 564,645 598,645 605,648 612,648 633,628 646,631 667,635 694,635 708,628 715,635 729,638 743,645 757,641 784,652 790,649 797,652 811,648 818,652 846,652 873,645 894,648 908,642 922,638 935,645 949,645 960,649 970,645 980,652 997,638 1011,640 1031,648 1058,648'],
    [6, '83,652 97,652 103,655 110,652 117,655 138,655 145,652 158,655 193,655 269,655 275,652 282,655 303,655 310,648 323,648 330,652 351,652 358,655 399,655 413,659 420,655 447,659 475,659 482,655 505,655 509,659 516,655 544,655 557,650 564,642 578,645 591,652 612,652 619,648 633,635 660,635 674,638 681,645 688,648 694,645 702,635 715,640 729,642 743,648 770,650 777,655 832,655 839,659 846,659 860,652 915,652 922,645 928,645 935,648 949,648 956,652 970,652 977,655 990,635 1004,631 1011,638 1024,645 1038,645 1045,652 1058,652'],
    [7, '392,673 406,673 413,669 420,673 426,669 454,669 461,673 488,673 495,676 502,673 509,673 516,669 523,673 543,673 550,669 557,673 591,673 598,669 605,673 633,673 640,669 646,673 702,673 708,669 715,669 722,673 729,669 736,673 750,673 757,669 763,669 770,673 777,669 839,669 852,662'],
    [8, '83,638 97,638 110,640 124,638 158,638 172,640 262,642 310,642 420,642 433,645 440,642 500,642 536,642 557,645 612,642 640,617 660,614 674,621 694,624 708,617 729,630 760,636 797,638 830,638 853,634 873,635 894,624 908,617 922,619 942,624 977,631 984,631 1004,627 1024,631 1038,635 1058,638']
];
series.forEach(([color, points]) => {
    add('lines', 'polyline', { points, class: 'shadow', transform: 'translate(1 1)' });
    add('lines', 'polyline', { points, stroke: colors[color] });
});

const names = [
    '村上市', '阿賀町', '新発田', '上越市', '関川村', '糸魚川', '新潟市', '南魚沼', '五泉市', '三条市', '長岡市', '佐渡市', '刈羽村', '刈羽村',
    '柏崎市', '柏崎市', '湯沢町', '柏崎市', '十日町', '柏崎市', '刈羽村', '柏崎市', '発電所', '発電所', '刈羽村', '津南町', '阿賀野', '胎内市'
];
names.forEach((name, n) => {
    const x = n < 14 ? 1088 : 1195;
    const y = 435 + (n % 14) * 18;
    add('legend', 'line', { x1: x, x2: x + 16, y1: y, y2: y, stroke: colors[n % 9], 'stroke-width': 3 });
    add('legend', 'text', { x: x + 21, y: y + 4, class: 'key' }, '新潟県(' + name + ')');
});
```
